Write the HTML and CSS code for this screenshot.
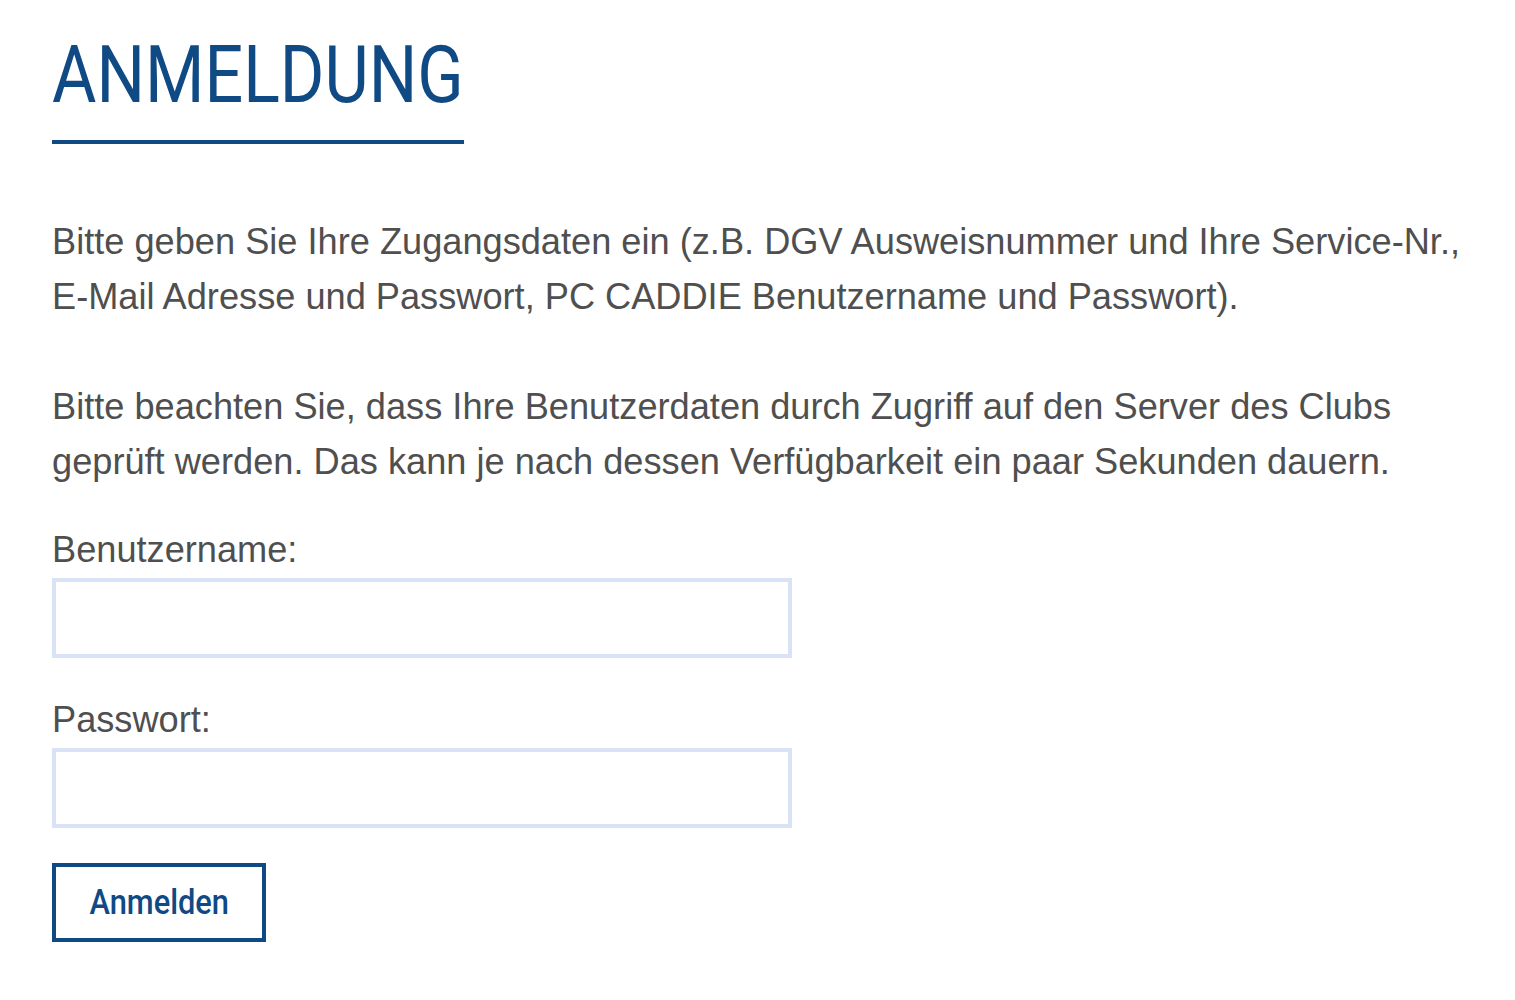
FILE: index.html
```html
<!DOCTYPE html>
<html lang="de">
<head>
    <meta charset="UTF-8">
    <meta name="viewport" content="width=device-width, initial-scale=1.0">
    <title>Anmeldung</title>
    <link rel="stylesheet" href="styles.css">
</head>
<body>
    <div class="login">
        <h1 class="login-title">ANMELDUNG</h1>

        <p class="login-text">Bitte geben Sie Ihre Zugangsdaten ein (z.B. DGV Ausweisnummer und Ihre Service-Nr., <span class="nowrap">E-Mail</span> Adresse und Passwort, PC CADDIE Benutzername und Passwort).</p>
        <p class="login-text">Bitte beachten Sie, dass Ihre Benutzerdaten durch Zugriff auf den Server des Clubs geprüft werden. Das kann je nach dessen Verfügbarkeit ein paar Sekunden dauern.</p>

        <form class="login-form">
            <label for="user">Benutzername:</label>
            <input type="text" id="user">
            <label for="pass">Passwort:</label>
            <input type="password" id="pass">
            <button type="submit"><span>Anmelden</span></button>
        </form>
    </div>
</body>
</html>
```

FILE: styles.css
```css
body {
    margin: 0;
    background: #fff;
    font-family: 'Liberation Sans', Arial, sans-serif;
    color: #4f4f4f;
}
.login {
    padding: 30px 52px 0 52px;
    width: 1425px;
}
.login-title {
    display: inline-block;
    margin: 0;
    padding-bottom: 20px;
    font-family: 'Roboto', sans-serif;
    font-weight: 400;
    font-size: 79px;
    line-height: 90px;
    color: #0f4a85;
    border-bottom: 4px solid #0f4a85;
    transform: scaleX(0.862);
    transform-origin: left top;
}
.login-text {
    margin: 70px 0 0 0;
    font-size: 36.2px;
    line-height: 55px;
}
.login-text + .login-text {
    margin-top: 55px;
}
.nowrap {
    white-space: nowrap;
}
.login-form {
    margin-top: 41px;
}
label {
    display: block;
    font-size: 36.2px;
    line-height: 40px;
    margin-bottom: 8px;
}
input {
    display: block;
    box-sizing: border-box;
    width: 740px;
    height: 80px;
    margin: 0 0 42px 0;
    border: 4px solid #d9e3f5;
    background: #fff;
    font-size: 30px;
}
button {
    box-sizing: border-box;
    width: 214px;
    height: 79px;
    margin-top: -7px;
    padding: 0;
    background: #fff;
    border: 4px solid #0f4a85;
    color: #0f4a85;
    font-family: 'Roboto', sans-serif;
    font-size: 35px;
    font-weight: 500;
    cursor: pointer;
}
button span {
    display: inline-block;
    transform: scaleX(0.88);
}
```
